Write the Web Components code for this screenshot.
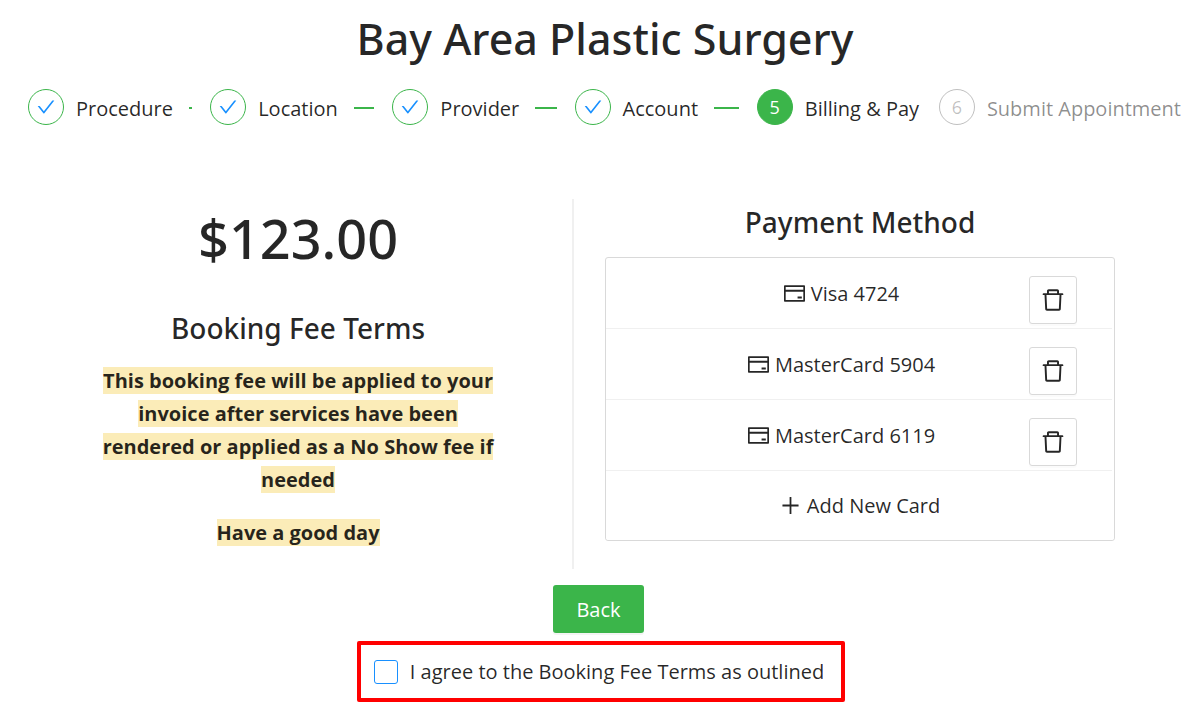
<!DOCTYPE html>
<html lang="en">
<head>
<meta charset="utf-8">
<meta name="viewport" content="width=device-width, initial-scale=1">
<title>Bay Area Plastic Surgery</title>
<style>
  :root {
    --green: #3bb54a;
    --blue: #1890ff;
    --text: rgba(0, 0, 0, 0.85);
    --muted: rgba(0, 0, 0, 0.45);
    --faint: rgba(0, 0, 0, 0.25);
    --border: #d9d9d9;
    --split: #f0f0f0;
    --heading-font: "Noto Sans", "Open Sans", sans-serif;
  }
  body {
    margin: 0;
    background: #fff;
    color: var(--text);
    font: 20px/33px "Open Sans", "Noto Sans", sans-serif;
  }
</style>
</head>
<body>
<booking-page></booking-page>

<script>
const ICONS = {
  check: 'M912 190h-69.9c-9.8 0-19.1 4.5-25.1 12.2L404.7 724.5 207 474a32 32 0 00-25.1-12.2H112c-6.7 0-10.4 7.7-6.3 12.9l273.9 347c12.8 16.2 37.4 16.2 50.3 0l488.4-618.9c4.1-5.1.4-12.8-6.3-12.8z',
  trash: 'M360 184h-8c4.4 0 8-3.6 8-8v8h304v-8c0 4.4 3.6 8 8 8h-8v72h72v-80c0-35.3-28.7-64-64-64H352c-35.3 0-64 28.7-64 64v80h72v-72zm504 72H160c-17.7 0-32 14.3-32 32v32c0 4.4 3.6 8 8 8h60.4l24.7 523c1.6 34.1 29.8 61 63.9 61h454c34.2 0 62.3-26.8 63.9-61l24.7-523H888c4.4 0 8-3.6 8-8v-32c0-17.7-14.3-32-32-32zM731.3 840H292.7l-24.2-512h487l-24.2 512z',
  card: 'M928 160H96c-17.7 0-32 14.3-32 32v640c0 17.7 14.3 32 32 32h832c17.7 0 32-14.3 32-32V192c0-17.7-14.3-32-32-32zm-792 72h752v120H136V232zm752 560H136V440h752v352zm-237-64h165c4.4 0 8-3.6 8-8v-72c0-4.4-3.6-8-8-8H651c-4.4 0-8 3.6-8 8v72c0 4.4 3.6 8 8 8z',
  plus: 'M482 152h60q8 0 8 8v704q0 8-8 8h-60q-8 0-8-8V160q0-8 8-8zM176 474h672q8 0 8 8v60q0 8-8 8H176q-8 0-8-8v-60q0-8 8-8z'
};

function define(name, markup, setup) {
  const template = document.createElement('template');
  template.innerHTML = markup;
  customElements.define(name, class extends HTMLElement {
    constructor() {
      super();
      this.attachShadow({ mode: 'open' }).append(template.content.cloneNode(true));
    }
    connectedCallback() {
      if (setup) setup(this, this.shadowRoot);
    }
  });
}

define('ui-icon', `
  <style>
    :host { display: inline-flex; flex: none; width: 21px; height: 21px; }
    svg { width: 100%; height: 100%; fill: currentColor; }
  </style>
  <svg viewBox="64 64 896 896" aria-hidden="true"><path/></svg>
`, (host, root) => {
  root.querySelector('path').setAttribute('d', ICONS[host.getAttribute('name')]);
});

define('booking-step', `
  <style>
    :host { display: flex; align-items: flex-start; min-width: 0; white-space: nowrap; }
    .mark {
      box-sizing: border-box; flex: none; width: 36px; height: 36px; margin-right: 12px;
      display: flex; align-items: center; justify-content: center;
      border: 1px solid var(--green); border-radius: 50%;
      color: var(--blue); font-size: 18px;
    }
    .mark ui-icon { width: 18px; height: 18px; }
    .title { line-height: 40px; }
    .line { display: none; flex: 1; align-self: center; height: 2px; margin: 0 18px 2px 16px; background: var(--green); }
    :host([state="done"]) .line { display: block; }
    :host([state="active"]) .mark { background: var(--green); color: #fff; }
    :host([state="wait"]) { color: var(--muted); }
    :host([state="wait"]) .mark { border-color: var(--faint); color: var(--faint); }
  </style>
  <span class="mark"></span><span class="title"><slot></slot></span><span class="line"></span>
`, (host, root) => {
  root.querySelector('.mark').innerHTML = host.getAttribute('state') === 'done'
    ? '<ui-icon name="check"></ui-icon>' : host.getAttribute('number');
});

define('booking-steps', `
  <style>
    :host { display: grid; grid-template-columns: repeat(5, minmax(0, 1fr)) auto; padding: 0 13px 0 28px; }
  </style>
  <slot></slot>
`);

define('fee-terms', `
  <style>
    :host { display: block; padding: 0 74px; border-right: 2px solid var(--split); text-align: center; }
    .amount { margin: 0 0 32px; font: 500 54px/78px var(--heading-font); }
    h3 { margin: 0 0 17px; font: 500 28px/38px var(--heading-font); }
    ::slotted(p) { margin: 0 0 20px; }
  </style>
  <p class="amount"><slot name="amount"></slot></p>
  <h3>Booking Fee Terms</h3>
  <slot></slot>
`);

define('card-row', `
  <style>
    :host {
      display: flex; align-items: center; box-sizing: border-box; height: 71px;
      margin-right: 2px; padding: 0 35px 0 48px; border-bottom: 1px solid var(--split);
    }
    button { font: inherit; color: inherit; cursor: pointer; background: #fff; }
    .pick { flex: 1; display: flex; align-items: center; justify-content: center; gap: 6px; padding: 0; border: 0; }
    .remove {
      align-self: flex-start; flex: none; box-sizing: border-box; width: 48px; height: 48px; margin-top: 18px;
      display: flex; align-items: center; justify-content: center; padding: 0;
      border: 1px solid var(--border); border-radius: 3px; box-shadow: 0 2px 0 rgba(0, 0, 0, 0.015);
    }
    .remove ui-icon { width: 24px; height: 24px; }
  </style>
  <button class="pick" type="button"><ui-icon name="card"></ui-icon><span><slot></slot></span></button>
  <button class="remove" type="button" aria-label="Remove card"><ui-icon name="trash"></ui-icon></button>
`);

define('payment-method', `
  <style>
    :host { display: block; padding: 4px 55px 0 31px; text-align: center; }
    h2 { margin: 0 0 16px; font: 500 28px/38px var(--heading-font); }
    .list { border: 1px solid var(--border); border-radius: 3px; }
    .add {
      display: flex; align-items: center; justify-content: center; gap: 6px;
      width: 100%; height: 69px; padding: 0; border: 0; border-radius: 3px; background: #fff;
      font: inherit; color: inherit; cursor: pointer;
    }
  </style>
  <h2>Payment Method</h2>
  <div class="list">
    <slot></slot>
    <button class="add" type="button"><ui-icon name="plus"></ui-icon>Add New Card</button>
  </div>
`);

define('booking-footer', `
  <style>
    :host { display: flex; flex-direction: column; align-items: center; gap: 8px; padding: 16px 21px 8px 24px; }
    button {
      height: 48px; padding: 0 23px; border: 0; border-radius: 3px; background: var(--green); color: #fff;
      font: inherit; cursor: pointer; box-shadow: 0 2px 0 rgba(0, 0, 0, 0.045);
    }
    label {
      display: flex; align-items: center; gap: 12px; margin-left: 5px; padding: 10px 17px 10px 13px;
      border: 4px solid #f00; border-radius: 2px;
    }
    input {
      appearance: none; flex: none; box-sizing: border-box; width: 24px; height: 24px; margin: 0;
      border: 1px solid var(--blue); border-radius: 3px; background: #fff;
    }
    input:checked { background: var(--blue); }
  </style>
  <button type="button">Back</button>
  <label for="agree"><input type="checkbox" id="agree">I agree to the Booking Fee Terms as outlined</label>
`);

define('booking-page', `
  <style>
    :host { display: block; padding-top: 12px; }
    h1 { margin: 0 0 23px; padding-left: 16px; font: 500 43px/54px var(--heading-font); text-align: center; }
    main { display: grid; grid-template-columns: minmax(0, 24fr) minmax(0, 26fr); margin-top: 70px; padding: 0 24px; }
    mark { background: #fbecb8; color: inherit; font-weight: 700; }
  </style>
  <h1>Bay Area Plastic Surgery</h1>
  <booking-steps>
    <booking-step state="done">Procedure</booking-step>
    <booking-step state="done">Location</booking-step>
    <booking-step state="done">Provider</booking-step>
    <booking-step state="done">Account</booking-step>
    <booking-step state="active" number="5">Billing &amp; Pay</booking-step>
    <booking-step state="wait" number="6">Submit Appointment</booking-step>
  </booking-steps>
  <main>
    <fee-terms>
      <span slot="amount">$123.00</span>
      <p><mark>This booking fee will be applied to your invoice after services have been rendered or applied as a No Show fee if needed</mark></p>
      <p><mark>Have a good day</mark></p>
    </fee-terms>
    <payment-method>
      <card-row>Visa 4724</card-row>
      <card-row>MasterCard 5904</card-row>
      <card-row>MasterCard 6119</card-row>
    </payment-method>
  </main>
  <booking-footer></booking-footer>
`);
</script>
</body>
</html>
